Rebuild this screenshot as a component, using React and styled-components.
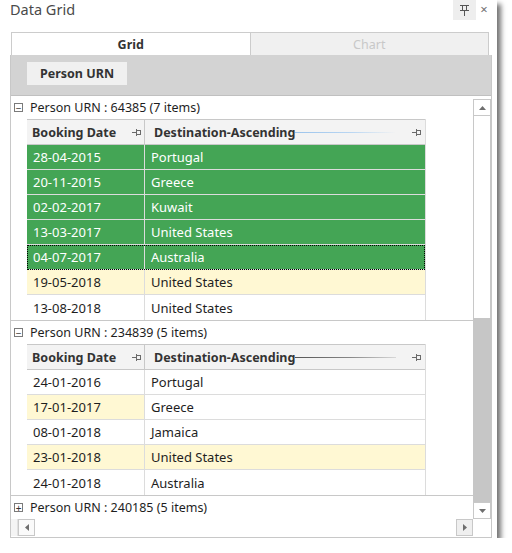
import React from 'react'
import styled, { createGlobalStyle } from 'styled-components'

const GlobalStyle = createGlobalStyle`
  html, body {
    margin: 0;
    padding: 0;
    background: #ffffff;
  }
  body {
    font-family: "Noto Sans", "Open Sans", "DejaVu Sans", sans-serif;
    font-size: 12px;
    color: #1e1e1e;
  }
`

const colors = {
  green: '#44a555',
  yellow: '#fff8d3',
  line: '#c8c8c8',
  rowLine: '#dcdcdc',
  header: '#f3f3f3',
  panel: '#d3d3d3',
}

const groups = [
  {
    urn: '64385',
    open: true,
    sortLine: 'linear-gradient(90deg, #9cc4ec 0%, #b9d6f2 55%, rgba(230,240,250,0) 100%)',
    rows: [
      { date: '28-04-2015', dest: 'Portugal', tone: 'green' },
      { date: '20-11-2015', dest: 'Greece', tone: 'green' },
      { date: '02-02-2017', dest: 'Kuwait', tone: 'green' },
      { date: '13-03-2017', dest: 'United States', tone: 'green' },
      { date: '04-07-2017', dest: 'Australia', tone: 'green', focus: true },
      { date: '19-05-2018', dest: 'United States', tone: 'yellow', destTone: 'yellow' },
      { date: '13-08-2018', dest: 'United States' },
    ],
  },
  {
    urn: '234839',
    open: true,
    sortLine: 'linear-gradient(90deg, #555 0%, #888 55%, #d8d8d8 100%)',
    rows: [
      { date: '24-01-2016', dest: 'Portugal' },
      { date: '17-01-2017', dest: 'Greece', tone: 'yellow' },
      { date: '08-01-2018', dest: 'Jamaica' },
      { date: '23-01-2018', dest: 'United States', tone: 'yellow', destTone: 'yellow' },
      { date: '24-01-2018', dest: 'Australia' },
    ],
  },
  { urn: '240185', open: false, rows: [] },
]

const PinIcon = ({ side }) =>
  side ? (
    <svg width="10" height="9" viewBox="0 0 10 9">
      <g stroke="#6a6a6a" strokeWidth="1" fill="none" shapeRendering="crispEdges">
        <line x1="0" y1="4.5" x2="4" y2="4.5" />
        <line x1="4.5" y1="1" x2="4.5" y2="8" />
        <line x1="4.5" y1="2.5" x2="9" y2="2.5" />
        <line x1="4.5" y1="6.5" x2="9" y2="6.5" />
        <line x1="8.5" y1="2" x2="8.5" y2="7" />
      </g>
    </svg>
  ) : (
    <svg width="9" height="11" viewBox="0 0 9 11">
      <g stroke="#555" strokeWidth="1" fill="none" shapeRendering="crispEdges">
        <line x1="0" y1="0.5" x2="9" y2="0.5" />
        <line x1="2.5" y1="0" x2="2.5" y2="5" />
        <line x1="6.5" y1="0" x2="6.5" y2="5" />
        <line x1="0" y1="5.5" x2="9" y2="5.5" />
        <line x1="4.5" y1="5" x2="4.5" y2="11" />
      </g>
    </svg>
  )

const Arrow = ({ dir }) => {
  const pts = {
    up: '0,4 3.5,0 7,4',
    down: '0,0 3.5,4 7,0',
    left: '4,0 0,3.5 4,7',
    right: '0,0 4,3.5 0,7',
  }[dir]
  const vertical = dir === 'up' || dir === 'down'
  return (
    <svg width={vertical ? 7 : 4} height={vertical ? 4 : 7} viewBox={vertical ? '0 0 7 4' : '0 0 4 7'}>
      <polygon points={pts} fill="#6e6e6e" />
    </svg>
  )
}

const App = () => {
  return (
    <>
      <GlobalStyle />
      <Window>
        <TitleBar>
          <Title>Data Grid</Title>
          <TitleButtons>
            <PinButton>
              <PinIcon />
            </PinButton>
            <CloseButton>×</CloseButton>
          </TitleButtons>
        </TitleBar>
        <Content>
          <Tabs>
            <Tab active>Grid</Tab>
            <Tab>Chart</Tab>
          </Tabs>
          <Frame>
            <GroupPanel>
              <GroupChip>Person URN</GroupChip>
            </GroupPanel>
            <Middle>
              <Scroller>
                {groups.map((g, gi) => (
                  <Group key={g.urn} first={gi === 0}>
                    <GroupHeader>
                      <Expander>{g.open ? '−' : '+'}</Expander>
                      Person URN : {g.urn} ({g.open ? g.rows.length : 5} items)
                    </GroupHeader>
                    {g.open && (
                      <Table>
                        <HeadRow>
                          <HeadCell>
                            <span>Booking Date</span>
                            <PinSpot>
                              <PinIcon side />
                            </PinSpot>
                          </HeadCell>
                          <HeadCell>
                            <span>Destination-Ascending</span>
                            <SortLine style={{ background: g.sortLine }} />
                            <PinSpot>
                              <PinIcon side />
                            </PinSpot>
                          </HeadCell>
                        </HeadRow>
                        {g.rows.map((r) => (
                          <Row key={r.date} focus={r.focus}>
                            <Cell tone={r.tone}>{r.date}</Cell>
                            <Cell tone={r.destTone || (r.tone === 'green' ? 'green' : undefined)}>{r.dest}</Cell>
                          </Row>
                        ))}
                      </Table>
                    )}
                  </Group>
                ))}
              </Scroller>
              <VScroll>
                <ScrollButton>
                  <Arrow dir="up" />
                </ScrollButton>
                <VTrack />
                <VThumb />
                <ScrollButton>
                  <Arrow dir="down" />
                </ScrollButton>
              </VScroll>
            </Middle>
            <HScroll>
              <HStub />
              <HButton>
                <Arrow dir="left" />
              </HButton>
              <HTrack />
              <HButton hot>
                <Arrow dir="right" />
              </HButton>
              <Corner />
            </HScroll>
          </Frame>
        </Content>
      </Window>
    </>
  )
}

const Window = styled.div`
  width: 497px;
  height: 538px;
  background: #ffffff;
  box-shadow: 4px 4px 5px rgba(0, 0, 0, 0.55);
  display: flex;
  flex-direction: column;
`

const TitleBar = styled.div`
  height: 32px;
  display: flex;
  justify-content: space-between;
  align-items: flex-start;
`

const Title = styled.div`
  padding: 0 0 0 10px;
  font-size: 14.5px;
  line-height: 18px;
  color: #4a4a4a;
`

const TitleButtons = styled.div`
  display: flex;
  align-items: center;
  padding-right: 5px;
`

const PinButton = styled.div`
  width: 23px;
  height: 20px;
  background: #eeeeee;
  display: flex;
  align-items: center;
  justify-content: center;
`

const CloseButton = styled.div`
  width: 16px;
  height: 20px;
  text-align: center;
  line-height: 18px;
  font-size: 13px;
  color: #707070;
`

const Content = styled.div`
  flex: 1;
  display: flex;
  flex-direction: column;
  padding: 0 5px 0 10px;
`

const Tabs = styled.div`
  display: flex;
  margin: 0 3px 0 1px;
  height: 23px;
`

const Tab = styled.div`
  flex: 1;
  display: flex;
  align-items: center;
  justify-content: center;
  border: 1px solid #cccccc;
  border-bottom: none;
  background: ${(p) => (p.active ? '#ffffff' : '#f0f0f0')};
  color: ${(p) => (p.active ? '#333333' : '#c8c8c8')};
  font-weight: ${(p) => (p.active ? 700 : 400)};
  font-size: 12.5px;
  & + & {
    border-left: none;
  }
`

const Frame = styled.div`
  flex: 1;
  display: flex;
  flex-direction: column;
  border: 1px solid ${colors.line};
  border-top: none;
`

const GroupPanel = styled.div`
  background: ${colors.panel};
  border-bottom: 1px solid #c0c0c0;
  padding: 7px 0 0 16px;
  box-sizing: border-box;
  height: 41px;
`

const GroupChip = styled.div`
  width: 100px;
  height: 23px;
  background: #f0f0f0;
  font-weight: 700;
  font-size: 12.5px;
  color: #333333;
  display: flex;
  align-items: center;
  justify-content: center;
`

const Middle = styled.div`
  display: flex;
  height: 423px;
`

const Scroller = styled.div`
  flex: 1;
  overflow: hidden;
  background: #ffffff;
`

const Group = styled.div`
  border-top: ${(p) => (p.first ? 'none' : `1px solid ${colors.line}`)};
`

const GroupHeader = styled.div`
  height: 23px;
  display: flex;
  align-items: center;
  padding-left: 3px;
  color: #1e1e1e;
  font-size: 12.5px;
  white-space: nowrap;
`

const Expander = styled.span`
  width: 9px;
  height: 9px;
  border: 1px solid #7a7a7a;
  box-sizing: border-box;
  margin-right: 7px;
  display: inline-flex;
  align-items: center;
  justify-content: center;
  font-size: 10px;
  line-height: 1;
  color: #333;
`

const Table = styled.div`
  margin-left: 16px;
  width: 398px;
  border-right: 1px solid ${colors.rowLine};
`

const HeadRow = styled.div`
  display: grid;
  grid-template-columns: 117px 1fr;
  height: 26px;
  box-sizing: border-box;
  background: ${colors.header};
  border-top: 1px solid ${colors.line};
  border-bottom: 1px solid ${colors.line};
`

const HeadCell = styled.div`
  display: flex;
  align-items: center;
  padding-left: 5px;
  padding-right: 2px;
  font-weight: 700;
  font-size: 12.5px;
  color: #333333;
  white-space: nowrap;
  & + & {
    border-left: 1px solid ${colors.line};
    padding-left: 9px;
    padding-right: 3px;
  }
`

const SortLine = styled.div`
  flex: 1;
  height: 1px;
  margin: 1px 16px 0 0;
`

const PinSpot = styled.span`
  margin-left: auto;
  display: flex;
  align-items: center;
`

const Row = styled.div`
  display: grid;
  grid-template-columns: 117px 1fr;
  height: 25px;
  box-sizing: border-box;
  border-bottom: 1px solid ${colors.rowLine};
  outline: ${(p) => (p.focus ? '1px dotted #000' : 'none')};
  outline-offset: -1px;
  &:last-child {
    border-bottom: none;
  }
`

const Cell = styled.div`
  display: flex;
  align-items: center;
  padding-left: 6px;
  font-size: 13px;
  white-space: nowrap;
  background: ${(p) => (p.tone === 'green' ? colors.green : p.tone === 'yellow' ? colors.yellow : 'transparent')};
  color: ${(p) => (p.tone === 'green' ? '#ffffff' : '#1e1e1e')};
  & + & {
    border-left: 1px solid ${colors.rowLine};
  }
`

const VScroll = styled.div`
  width: 18px;
  display: flex;
  flex-direction: column;
  padding-top: 3px;
  box-sizing: border-box;
`

const ScrollButton = styled.div`
  height: 17px;
  box-sizing: border-box;
  border: 1px solid ${colors.line};
  background: #ffffff;
  display: flex;
  align-items: center;
  justify-content: center;
`

const VTrack = styled.div`
  flex: 1;
  border-left: 1px solid ${colors.line};
  border-right: 1px solid ${colors.line};
`

const VThumb = styled.div`
  height: 184px;
  background: #c6c6c6;
`

const HScroll = styled.div`
  height: 17px;
  display: flex;
`

const HStub = styled.div`
  width: 6px;
  background: #f4f4f4;
  border-right: 1px solid #e0e0e0;
`

const HButton = styled.div`
  width: 17px;
  box-sizing: border-box;
  border: 1px solid ${colors.line};
  background: ${(p) => (p.hot ? '#efefef' : '#fafafa')};
  display: flex;
  align-items: center;
  justify-content: center;
`

const HTrack = styled.div`
  flex: 1;
`

const Corner = styled.div`
  width: 18px;
`

export default App
